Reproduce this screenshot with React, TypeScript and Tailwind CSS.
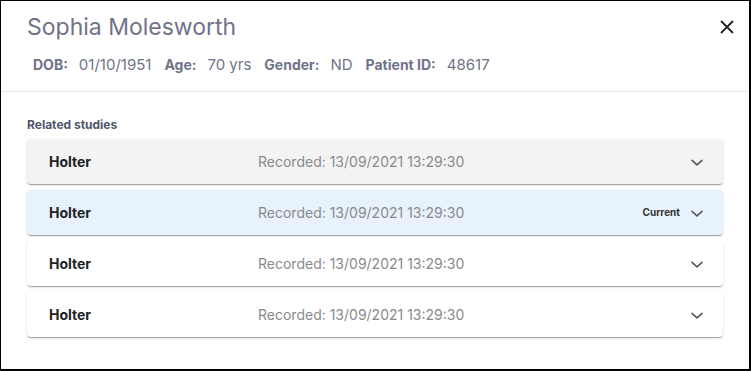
import React from "react";

function Chevron() {
  return (
    <svg width="20" height="20" viewBox="0 0 24 24" fill="none" className="text-[#555]">
      <path d="M6 10l6 5.5 6-5.5" stroke="currentColor" strokeWidth="1.8" strokeLinecap="round" strokeLinejoin="round" />
    </svg>
  );
}

function Card({ bg, current }: { bg: string; current?: boolean }) {
  return (
    <div
      className={`${bg} h-[45px] rounded-[4px] flex items-center pl-[22px] pr-[16px] shadow-[0_2px_1px_-1px_rgba(0,0,0,0.2),0_1px_1px_0_rgba(0,0,0,0.14),0_1px_3px_0_rgba(0,0,0,0.12)]`}
    >
      <div className="w-[209px] text-[14px] font-bold text-[#222]">Holter</div>
      <div className="flex-1 text-[14px] text-[#8a8a8a]">Recorded: 13/09/2021 13:29:30</div>
      {current && <div className="text-[10px] font-bold text-[#333] mr-[7px]">Current</div>}
      <Chevron />
    </div>
  );
}

function Item({ label, value }: { label: string; value: string }) {
  return (
    <span className="flex items-baseline">
      <b className="font-bold text-[14px] mr-[11px]">{label}</b>
      <span className="text-[15px]">{value}</span>
    </span>
  );
}

export default function App() {
  return (
    <div
      className="w-[751px] h-[371px] bg-white border-l border-t border-r-2 border-b-2 border-black relative"
      style={{ fontFamily: "Inter, 'Noto Sans', sans-serif" }}
    >
      <div className="px-[26px] pt-[11px] h-[91px] border-b border-[#e6e6e6]">
        <div className="text-[23px] leading-[30px] text-[#6f7388]">Sophia Molesworth</div>
        <div className="flex items-baseline mt-[12px] ml-[6px] text-[#6f7388] gap-[13px]">
          <Item label="DOB:" value="01/10/1951" />
          <Item label="Age:" value="70 yrs" />
          <Item label="Gender:" value="ND" />
          <Item label="Patient ID:" value="48617" />
        </div>
      </div>
      <button className="absolute right-[14px] top-[18px] text-[#222]">
        <svg width="16" height="16" viewBox="0 0 16 16">
          <path d="M2 2l12 12M14 2L2 14" stroke="currentColor" strokeWidth="1.8" />
        </svg>
      </button>
      <div className="px-[26px] pt-[24px]">
        <div className="text-[12px] font-bold text-[#50546a] mb-[5px]">Related studies</div>
        <div className="flex flex-col gap-[6px]">
          <Card bg="bg-[#f3f3f3]" />
          <Card bg="bg-[#e8f2fd]" current />
          <Card bg="bg-white" />
          <Card bg="bg-white" />
        </div>
      </div>
    </div>
  );
}
